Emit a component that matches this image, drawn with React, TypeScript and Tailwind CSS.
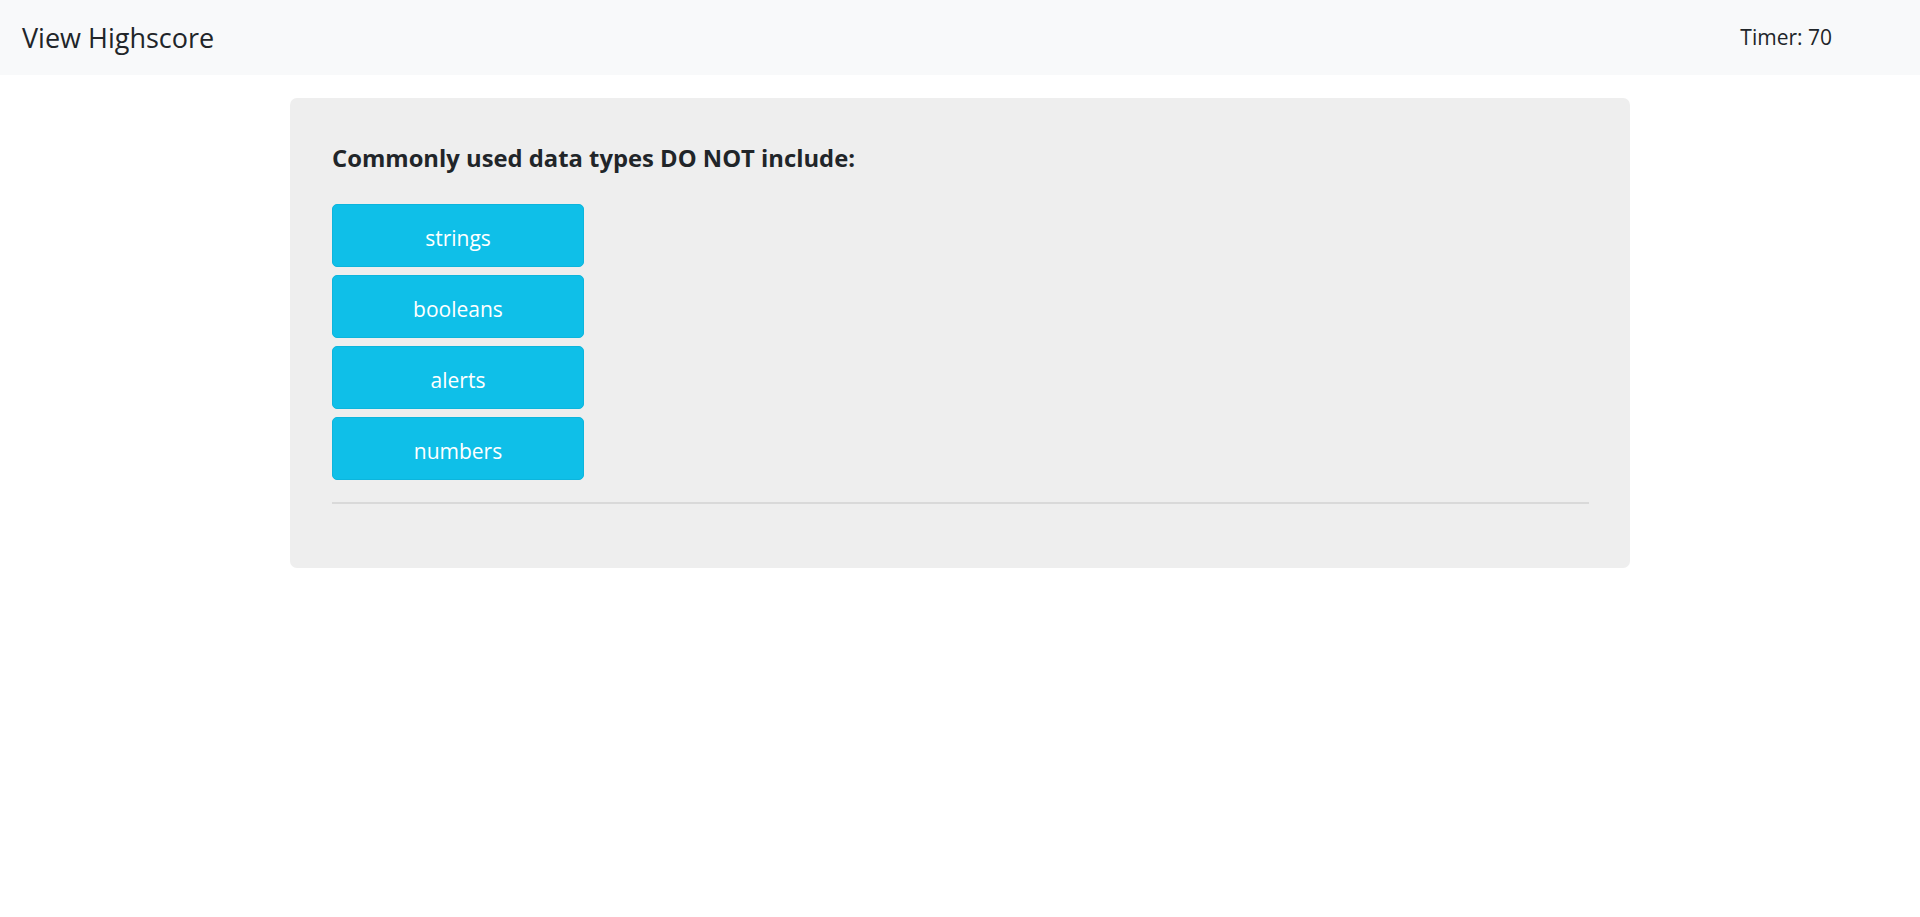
import React from 'react';

const choices = ['strings', 'booleans', 'alerts', 'numbers'];

export default function App() {
  return (
    <div className="min-h-screen bg-white text-[#212529]" style={{ fontFamily: '"Open Sans", "Noto Sans", sans-serif' }}>
      {/* Navbar */}
      <nav className="h-[75px] bg-[#f8f9fa] flex items-center justify-between pl-[22px] pr-[88px]">
        <a href="#" className="text-[27px] leading-none font-normal text-[#212529]">
          View Highscore
        </a>
        <span className="text-[21px] leading-none">Timer: 70</span>
      </nav>

      {/* Quiz card */}
      <div className="w-[1340px] mx-auto mt-[23px] bg-[#eeeeee] rounded-[7px] pl-[42px] pr-[41px] pt-[46px] pb-[64px]">
        <h2 className="text-[23.8px] leading-[1.2] font-bold text-[#212529]">
          Commonly used data types DO NOT include:
        </h2>
        <div className="mt-[31px] flex flex-col gap-[8px]">
          {choices.map((c) => (
            <button
              key={c}
              className="w-[252px] h-[63px] pt-[6px] rounded-[5px] bg-[#0fbfe8] border border-[#0cb5dd] text-white text-[21px] leading-none"
            >
              {c}
            </button>
          ))}
        </div>
        <div className="mt-[22px] border-t-2 border-[#d9d9d9]" />
      </div>
    </div>
  );
}
